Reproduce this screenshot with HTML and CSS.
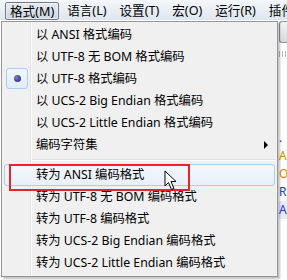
FILE: index.html
```html
<!DOCTYPE html>
<html>
<head>
	<title>格式菜单</title>
	<link rel="stylesheet" href="styles.css">
</head>
<body>
	<div class="menubar">
		<span class="barItem open">格式(M)</span>
		<span class="barItem">语言(L)</span>
		<span class="barItem">设置(T)</span>
		<span class="barItem">宏(O)</span>
		<span class="barItem">运行(R)</span>
		<span class="barItem">插件</span>
	</div>

	<div class="stage">
		<div class="editor">
			<div class="toolBtn"></div>
			<div class="dots"></div>
			<div class="lines">
				<div class="line blue">.</div>
				<div class="line orange">A</div>
				<div class="line orange">O</div>
				<div class="line blue">R</div>
				<div class="line blue marked">A</div>
			</div>
		</div>

		<div class="menu">
			<div class="item">以 ANSI 格式编码</div>
			<div class="item">以 UTF-8 无 BOM 格式编码</div>
			<div class="item checked"><span class="radio"><span class="bullet"></span></span>以 UTF-8 格式编码</div>
			<div class="item">以 UCS-2 Big Endian 格式编码</div>
			<div class="item">以 UCS-2 Little Endian 格式编码</div>
			<div class="item sub">编码字符集</div>
			<div class="sep"></div>
			<div class="item hover">转为 ANSI 编码格式</div>
			<div class="item">转为 UTF-8 无 BOM 编码格式</div>
			<div class="item">转为 UTF-8 编码格式</div>
			<div class="item">转为 UCS-2 Big Endian 编码格式</div>
			<div class="item">转为 UCS-2 Little Endian 编码格式</div>
		</div>

		<div class="redBox"></div>
		<svg class="pointer" width="14" height="22" viewBox="0 0 14 22">
			<polygon points="1,1 1,16 4.5,12.5 7.5,19.5 10,18.5 7,11.5 12,11.5" fill="#fff" stroke="#000" stroke-width="1" stroke-linejoin="round"/>
		</svg>
	</div>
</body>
</html>
```

FILE: styles.css
```css
body {
	margin : 0;
	width : 287px;
	height : 280px;
	overflow : hidden;
	font-family : "Noto Sans", "Noto Sans CJK SC", sans-serif;
	font-size : 12.3px;
	color : #000;
	background : #fff;
}
.menubar {
	height : 20px;
	display : flex;
	align-items : center;
	padding-left : 5px;
	background : linear-gradient(#f4f7fb, #dfe6f0);
	white-space : nowrap;
	overflow : hidden;
	font-size : 12.6px;
}
.barItem {
	height : 18px;
	line-height : 17px;
	padding : 0 4px;
	margin-right : 3px;
	border : 1px solid transparent;
	border-radius : 2px;
	box-sizing : border-box;
	flex-shrink : 0;
}
.open {
	border-color : #6f7b8b;
	background : linear-gradient(#e6ebf2, #ccd5e1);
	box-shadow : inset 0 0 0 1px rgba(255, 255, 255, 0.5);
	margin-top : 2px;
}
.stage {
	position : relative;
	height : 260px;
}
.editor {
	height : 100%;
	padding-left : 279px;
	background : #fff;
}
.toolBtn {
	height : 20px;
	margin : 1px 0 0 0;
	border : 1px solid #8e959e;
	border-right : none;
	border-radius : 3px 0 0 3px;
	background : linear-gradient(#f3f3f3, #d9d9d9);
}
.dots {
	height : 6px;
	margin-top : 8px;
	background : repeating-linear-gradient(90deg, #b8b8b8 0 1px, transparent 1px 3px);
}
.lines {
	margin-top : 72px;
}
.line {
	height : 18px;
	line-height : 18px;
	font-size : 12px;
}
.blue {
	color : #2a3bd6;
}
.orange {
	color : #d88a10;
}
.marked {
	background : #e8e8ff;
}
.menu {
	position : absolute;
	left : 1px;
	top : 0;
	width : 277px;
	height : 256px;
	box-sizing : border-box;
	padding : 2px 2px;
	border : 1px solid #979797;
	background : linear-gradient(90deg, #f0f0f0 0 28px, #e2e3e3 28px 29px, #ffffff 29px 30px, #f0f0f0 30px);
	box-shadow : 2px 2px 2px rgba(0, 0, 0, 0.25);
}
.item {
	position : relative;
	height : 22px;
	line-height : 22px;
	padding-left : 32px;
	box-sizing : border-box;
	white-space : nowrap;
}
.hover {
	border : 1px solid #a9cdf3;
	border-radius : 3px;
	line-height : 20px;
	padding-left : 31px;
	background : linear-gradient(#f3f7fc, #e8f0fa);
}
.radio {
	position : absolute;
	left : 2px;
	top : 0;
	width : 22px;
	height : 21px;
	box-sizing : border-box;
	border : 1px solid #a9cdf3;
	border-radius : 3px;
	background : linear-gradient(#f2f7fd, #e2edfa);
	display : flex;
	align-items : center;
	justify-content : center;
}
.bullet {
	width : 7px;
	height : 7px;
	border-radius : 50%;
	background : radial-gradient(circle at 35% 35%, #7a7fc0, #1e2170);
}
.sub::after {
	content : "";
	position : absolute;
	right : 7px;
	top : 7px;
	border-left : 4px solid #000;
	border-top : 4px solid transparent;
	border-bottom : 4px solid transparent;
}
.sep {
	height : 8px;
	margin-left : 28px;
	background : linear-gradient(#f0f0f0 0 3px, #e0e0e0 3px 4px, #ffffff 4px 5px, #f0f0f0 5px);
}
.redBox {
	position : absolute;
	left : 9px;
	top : 143px;
	width : 181px;
	height : 27px;
	box-sizing : border-box;
	border : 2px solid #e8232a;
}
.pointer {
	position : absolute;
	left : 164px;
	top : 149px;
}
```
